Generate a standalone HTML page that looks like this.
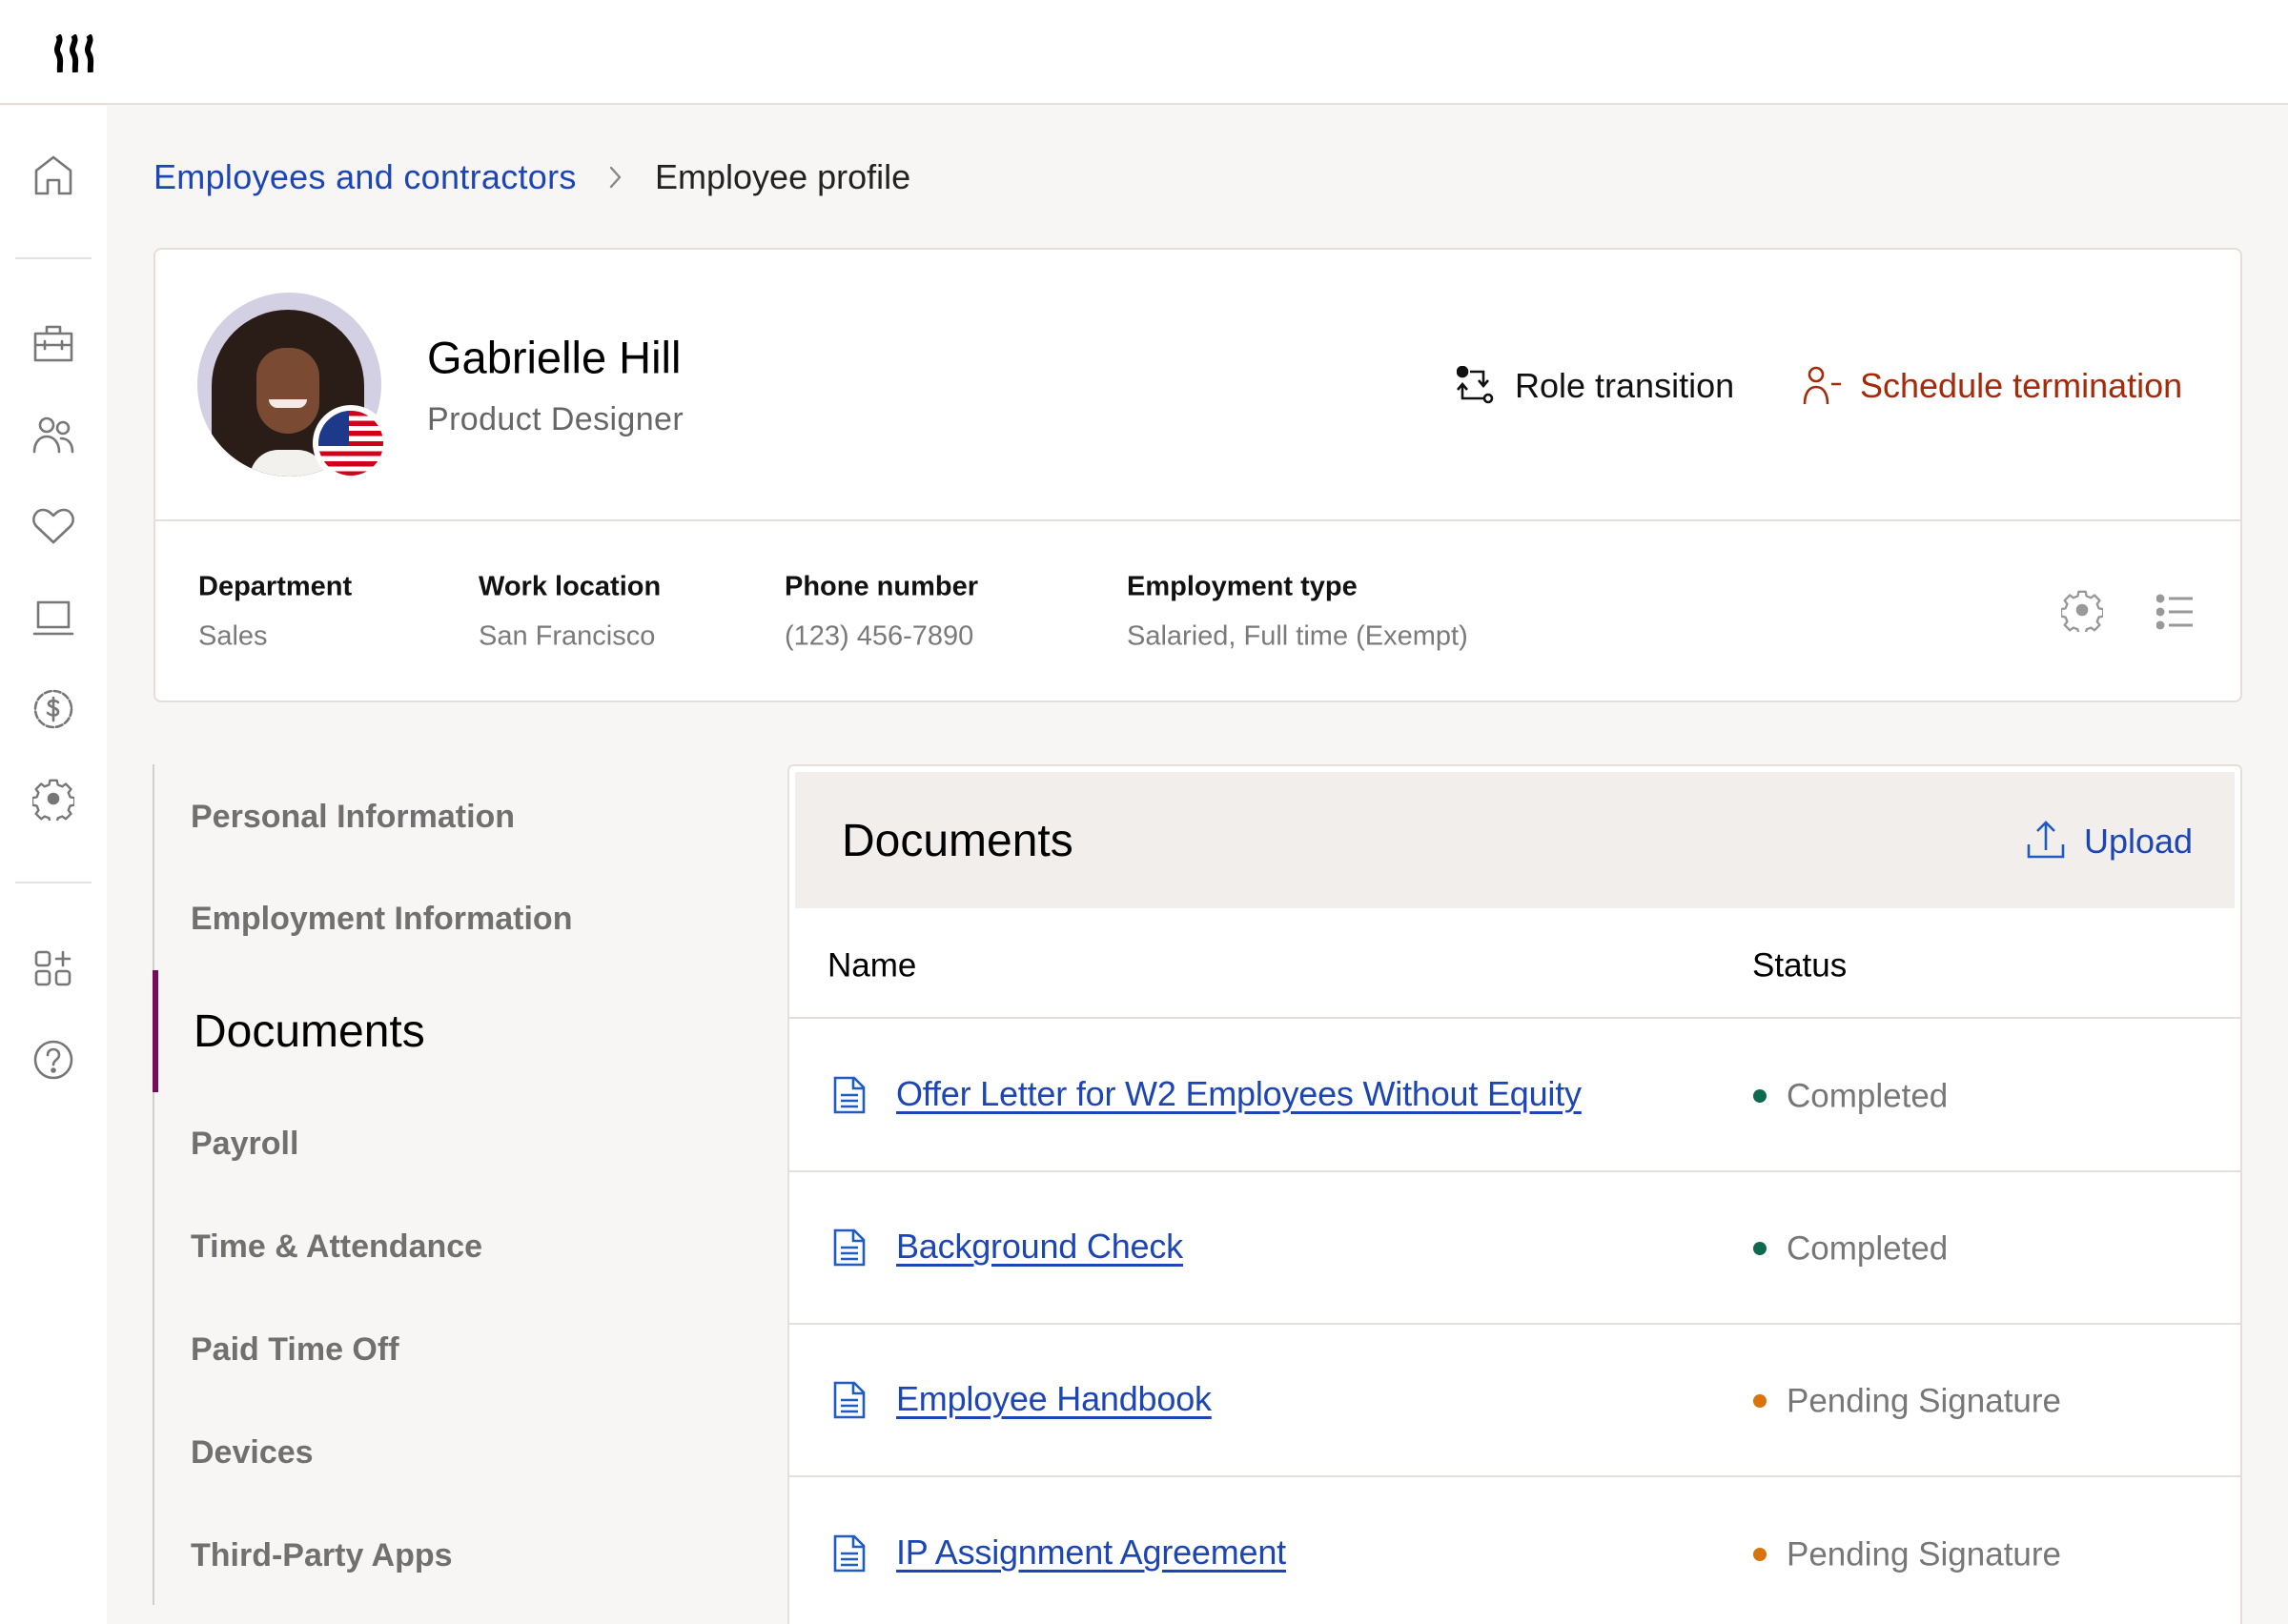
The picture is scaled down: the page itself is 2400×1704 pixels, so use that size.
<!DOCTYPE html>
<html style="overflow:hidden;width:2400px;height:1704px"><head><meta charset="utf-8"><style>
*{margin:0;padding:0;box-sizing:border-box}
body{width:2400px;height:1704px;overflow:hidden;background:#f7f6f4;font-family:"Liberation Sans",sans-serif;position:relative;color:#111}
.a{position:absolute}
.t{position:absolute;white-space:nowrap;line-height:1;transform:translateY(-50%)}
svg.i{position:absolute;fill:none;stroke:#777;stroke-width:2.6;stroke-linecap:round;stroke-linejoin:round}
.nav{font-size:34px;color:#707070;font-weight:bold;left:200px}
.lnk{font-size:36px;color:#1c45b5;text-decoration:underline;text-decoration-thickness:3px;text-underline-offset:6px;left:940px;letter-spacing:-0.2px}
.st{font-size:35px;color:#777;left:1874px}
.dot{position:absolute;width:14px;height:14px;border-radius:50%;left:1839px}
.lbl{font-size:29px;font-weight:bold;color:#111}
.val{font-size:29px;color:#7a7a7a}
</style></head><body>
<div class="a" style="left:0;top:0;width:2400px;height:110px;background:#fff;border-bottom:2px solid #e4dfda"></div>
<svg class="a" style="left:56px;top:36px" width="50" height="40" viewBox="0 0 50 40"><g fill="none" stroke="#000" stroke-width="6"><path d="M5 1 C10 8,1 13,5 20 C9 27,6 33,7 40"/><path d="M21 1 C26 8,17 13,21 20 C25 27,22 33,23 40"/><path d="M37 1 C42 8,33 13,37 20 C41 27,38 33,39 40"/></g></svg>
<div class="a" style="left:0;top:111px;width:112px;height:1593px;background:#fff"></div>
<svg class="i" style="left:35px;top:163px" width="42" height="42" viewBox="0 0 42 42"><path d="M3 40V16L21 2l18 14v24H27V26H15v14z"/></svg>
<div class="a" style="left:16px;top:270px;width:80px;height:2px;background:#e2e2e2"></div>
<svg class="i" style="left:34px;top:340px" width="44" height="40" viewBox="0 0 44 40"><path d="M3 10h38v28H3zM15 10V3h14v7M3 22h38M13 18v8M31 18v8"/></svg>
<svg class="i" style="left:34px;top:436px" width="44" height="40" viewBox="0 0 44 40"><circle cx="15" cy="10" r="7"/><path d="M2 38c0-10 6-16 13-16s13 6 13 16"/><circle cx="32" cy="13" r="6"/><path d="M30 24c7 0 12 5 12 14"/></svg>
<svg class="i" style="left:33px;top:532px" width="46" height="40" viewBox="0 0 46 40"><path d="M23 37L5 20C-1 13 4 3 12 3c5 0 8 3 11 6 3-3 6-6 11-6 8 0 13 10 7 17z"/></svg>
<svg class="i" style="left:34px;top:628px" width="44" height="40" viewBox="0 0 44 40"><path d="M6 4h32v26H6zM2 37h40"/></svg>
<svg class="i" style="left:34px;top:722px" width="44" height="44" viewBox="0 0 44 44"><circle cx="22" cy="22" r="19" stroke-dasharray="7 3"/><path d="M27 15c-2-2-9-3-10 1s10 4 10 9-8 4-11 1M22 10v24"/></svg>
<svg class="i" style="left:34px;top:817px" width="44" height="44" viewBox="0 0 44 44"><path d="M18 3h8l1 5 5 2 4-3 6 6-3 4 2 5 5 1v8l-5 1-2 5 3 4-6 6-4-3-5 2-1 5h-8l-1-5-5-2-4 3-6-6 3-4-2-5-5-1v-8l5-1 2-5-3-4 6-6 4 3 5-2z" transform="scale(0.92) translate(2 -1)"/><circle cx="22" cy="21" r="5" fill="#777"/></svg>
<div class="a" style="left:16px;top:925px;width:80px;height:2px;background:#e2e2e2"></div>
<svg class="i" style="left:35px;top:996px" width="42" height="40" viewBox="0 0 42 40"><rect x="3" y="3" width="14" height="14" rx="3"/><rect x="3" y="23" width="14" height="14" rx="3"/><rect x="24" y="23" width="14" height="14" rx="3"/><path d="M31 3v14M24 10h14"/></svg>
<svg class="i" style="left:34px;top:1090px" width="44" height="44" viewBox="0 0 44 44"><circle cx="22" cy="22" r="19"/><path d="M16 17c0-4 3-6 6-6s6 2 6 6c0 5-6 5-6 10"/><circle cx="22" cy="33" r="1.5" fill="#777"/></svg>
<div class="t" style="left:161px;top:186px;font-size:36px;color:#1c45b5;letter-spacing:0.3px">Employees and contractors</div>
<svg class="i" style="left:638px;top:173px;stroke:#888;stroke-width:2.4" width="16" height="26" viewBox="0 0 16 26"><path d="M3 3l9 10-9 10"/></svg>
<div class="t" style="left:687px;top:186px;font-size:36px;color:#222">Employee profile</div>
<div class="a" style="left:161px;top:260px;width:2191px;height:477px;background:#fff;border:2px solid #e4dfda;border-radius:8px"></div>
<div class="a" style="left:162px;top:545px;width:2189px;height:2px;background:#e4dfda"></div>
<div class="a" style="left:207px;top:307px;width:193px;height:193px;border-radius:50%;background:#d3d0e3;overflow:hidden">
 <div class="a" style="left:15px;top:18px;width:160px;height:200px;border-radius:80px 80px 40px 40px;background:#2a1d18"></div>
 <div class="a" style="left:62px;top:58px;width:66px;height:90px;border-radius:33px 33px 36px 36px;background:#7a4a32"></div>
 <div class="a" style="left:75px;top:112px;width:40px;height:9px;border-radius:0 0 20px 20px;background:#f2ece6"></div>
 <div class="a" style="left:55px;top:165px;width:80px;height:40px;border-radius:30px 30px 0 0;background:#f3f1ee"></div>
</div>
<div class="a" style="left:328px;top:425px;width:80px;height:80px;border-radius:50%;background:#fff"></div>
<div class="a" style="left:334px;top:431px;width:68px;height:68px;border-radius:50%;overflow:hidden;background:repeating-linear-gradient(#d0021b 0 5.3px,#fff 5.3px 10.6px)">
 <div class="a" style="left:0;top:0;width:32px;height:37px;background:#1d3a8a"></div>
</div>
<div class="t" style="left:448px;top:375px;font-size:47px;color:#000">Gabrielle Hill</div>
<div class="t" style="left:448px;top:440px;font-size:34px;color:#666;letter-spacing:0.4px">Product Designer</div>
<svg class="a" style="left:1528px;top:384px" width="40" height="40" viewBox="0 0 40 40" fill="none" stroke="#111" stroke-width="2.6"><circle cx="6" cy="6" r="5" fill="#111"/><path d="M14 6h14v14M23 15l5 6 5-6M28 34H6V20M1 25l5-6 5 6"/><circle cx="33" cy="34" r="4"/></svg>
<div class="t" style="left:1589px;top:405px;font-size:36px;color:#111">Role transition</div>
<svg class="a" style="left:1891px;top:384px" width="44" height="40" viewBox="0 0 44 40" fill="none" stroke="#a52a0a" stroke-width="2.6"><circle cx="14" cy="9" r="7"/><path d="M2 40c0-12 5-18 12-18s12 6 12 18M30 19h10"/></svg>
<div class="t" style="left:1951px;top:405px;font-size:36px;color:#a52a0a">Schedule termination</div>
<div class="t lbl" style="left:208px;top:616px">Department</div>
<div class="t val" style="left:208px;top:668px">Sales</div>
<div class="t lbl" style="left:502px;top:616px">Work location</div>
<div class="t val" style="left:502px;top:668px">San Francisco</div>
<div class="t lbl" style="left:823px;top:616px">Phone number</div>
<div class="t val" style="left:823px;top:668px">(123) 456-7890</div>
<div class="t lbl" style="left:1182px;top:616px">Employment type</div>
<div class="t val" style="left:1182px;top:668px">Salaried, Full time (Exempt)</div>
<svg class="i" style="left:2162px;top:619px;stroke:#999" width="44" height="44" viewBox="0 0 44 44"><path d="M18 3h8l1 5 5 2 4-3 6 6-3 4 2 5 5 1v8l-5 1-2 5 3 4-6 6-4-3-5 2-1 5h-8l-1-5-5-2-4 3-6-6 3-4-2-5-5-1v-8l5-1 2-5-3-4 6-6 4 3 5-2z" transform="scale(0.92) translate(2 -1)"/><circle cx="22" cy="21" r="5" fill="#999"/></svg>
<svg class="a" style="left:2262px;top:622px" width="40" height="40" viewBox="0 0 40 40" fill="#999" stroke="#999" stroke-width="3"><circle cx="4" cy="6" r="3"/><circle cx="4" cy="20" r="3"/><circle cx="4" cy="34" r="3"/><path d="M13 6h25M13 20h25M13 34h25" fill="none"/></svg>
<div class="a" style="left:160px;top:802px;width:2px;height:882px;background:#cfcfcf"></div>
<div class="a" style="left:160px;top:1018px;width:6px;height:128px;background:#7a0a5a"></div>
<div class="t nav" style="top:857px">Personal Information</div>
<div class="t nav" style="top:964px">Employment Information</div>
<div class="t" style="left:203px;top:1083px;font-size:48px;color:#000">Documents</div>
<div class="t nav" style="top:1200px">Payroll</div>
<div class="t nav" style="top:1308px">Time &amp; Attendance</div>
<div class="t nav" style="top:1416px">Paid Time Off</div>
<div class="t nav" style="top:1524px">Devices</div>
<div class="t nav" style="top:1632px">Third-Party Apps</div>
<div class="a" style="left:826px;top:802px;width:1526px;height:910px;background:#fff;border:2px solid #e4dfda;border-radius:6px"></div>
<div class="a" style="left:834px;top:810px;width:1510px;height:143px;background:#f1eeeb"></div>
<div class="t" style="left:883px;top:883px;font-size:48px;color:#000">Documents</div>
<svg class="a" style="left:2126px;top:860px" width="40" height="42" viewBox="0 0 40 42" fill="none" stroke="#1f5bc4" stroke-width="2.6"><path d="M2 26v13h36V26M20 32V3M11 12l9-9 9 9"/></svg>
<div class="t" style="left:2186px;top:883px;font-size:36px;color:#1c45b5">Upload</div>
<div class="t" style="left:868px;top:1013px;font-size:35px;color:#000">Name</div>
<div class="t" style="left:1838px;top:1013px;font-size:35px;color:#000">Status</div>
<div class="a" style="left:828px;top:1067px;width:1522px;height:2px;background:#e4dfda"></div>
<div class="a" style="left:828px;top:1228px;width:1522px;height:2px;background:#e4dfda"></div>
<div class="a" style="left:828px;top:1388px;width:1522px;height:2px;background:#e4dfda"></div>
<div class="a" style="left:828px;top:1548px;width:1522px;height:2px;background:#e4dfda"></div>
<svg class="a" style="left:874px;top:1129px" width="34" height="40" viewBox="0 0 34 40" fill="none" stroke="#1f5bc4" stroke-width="2.6"><path d="M2 2h20l10 10v26H2zM21 2v11h11M8 20h18M8 26h18M8 32h18"/></svg>
<div class="t lnk" style="top:1148px">Offer Letter for W2 Employees Without Equity</div>
<div class="dot" style="top:1143px;background:#0d6a4f"></div><div class="t st" style="top:1150px">Completed</div>
<svg class="a" style="left:874px;top:1289px" width="34" height="40" viewBox="0 0 34 40" fill="none" stroke="#1f5bc4" stroke-width="2.6"><path d="M2 2h20l10 10v26H2zM21 2v11h11M8 20h18M8 26h18M8 32h18"/></svg>
<div class="t lnk" style="top:1308px">Background Check</div>
<div class="dot" style="top:1303px;background:#0d6a4f"></div><div class="t st" style="top:1310px">Completed</div>
<svg class="a" style="left:874px;top:1449px" width="34" height="40" viewBox="0 0 34 40" fill="none" stroke="#1f5bc4" stroke-width="2.6"><path d="M2 2h20l10 10v26H2zM21 2v11h11M8 20h18M8 26h18M8 32h18"/></svg>
<div class="t lnk" style="top:1468px">Employee Handbook</div>
<div class="dot" style="top:1463px;background:#d9730d"></div><div class="t st" style="top:1470px">Pending Signature</div>
<svg class="a" style="left:874px;top:1610px" width="34" height="40" viewBox="0 0 34 40" fill="none" stroke="#1f5bc4" stroke-width="2.6"><path d="M2 2h20l10 10v26H2zM21 2v11h11M8 20h18M8 26h18M8 32h18"/></svg>
<div class="t lnk" style="top:1629px">IP Assignment Agreement</div>
<div class="dot" style="top:1624px;background:#d9730d"></div><div class="t st" style="top:1631px">Pending Signature</div>
</body></html>
